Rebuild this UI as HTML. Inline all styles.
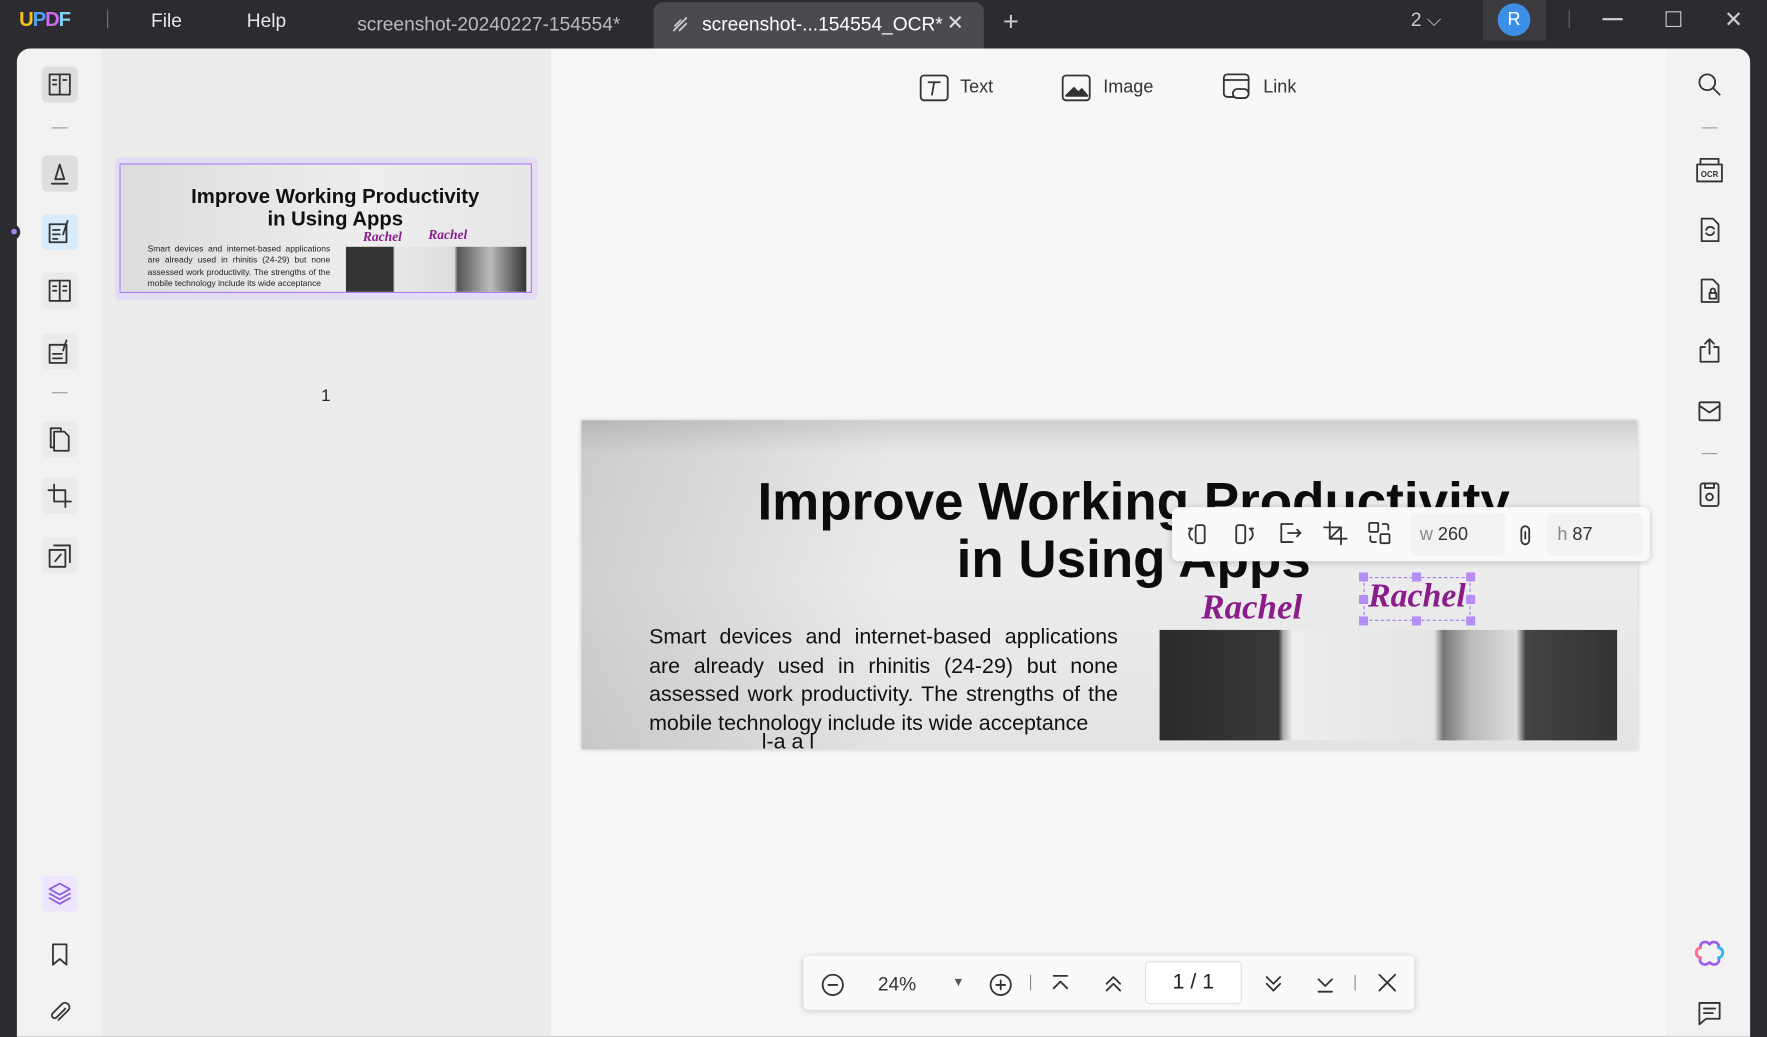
<!DOCTYPE html>
<html><head><meta charset="utf-8"><style>
*{margin:0;padding:0;box-sizing:border-box}
html,body{width:1767px;height:1037px;overflow:hidden;background:#2c2c30;font-family:"Liberation Sans",sans-serif}
#s{width:1568px;height:920px;transform:scale(1.12691);transform-origin:0 0;position:relative;background:#2c2c30}
.a{position:absolute}
.t{color:#e8e8e8;font-size:17px}
svg{position:absolute;fill:none;stroke:#333;stroke-width:1.6;stroke-linecap:round;stroke-linejoin:round}
.ib{position:absolute;left:37px;width:32px;height:32px;border-radius:5px;background:#dedede}
</style></head><body><div id="s">
<!-- title bar -->
<div class="a" style="left:17px;top:7px;font-size:18px;font-weight:bold;letter-spacing:-1px"><span style="color:#f5c21b">U</span><span style="color:#4fa3f7">P</span><span style="color:#c86df0">D</span><span style="color:#7fd3f5">F</span></div>
<div class="a" style="left:95px;top:9px;width:1px;height:16px;background:#777"></div>
<div class="a t" style="left:134px;top:9px">File</div>
<div class="a t" style="left:219px;top:9px">Help</div>
<div class="a" style="left:317px;top:12px;color:#bbb;font-size:17px">screenshot-20240227-154554*</div>
<div class="a" style="left:580px;top:2px;width:293px;height:41px;background:#4a4a4f;border-radius:8px 8px 0 0"></div>
<svg style="left:594px;top:12px" width="20" height="20" viewBox="0 0 20 20"><path d="M4 15 15 4M5 11l5-5M9 15l6-6" stroke="#ccc"/></svg>
<div class="a" style="left:623px;top:12px;color:#fff;font-size:17px">screenshot-...154554_OCR*</div>
<div class="a" style="left:840px;top:10px;color:#ddd;font-size:18px">✕</div>
<div class="a" style="left:890px;top:6px;color:#ccc;font-size:24px">+</div>
<div class="a t" style="left:1252px;top:8px;color:#ccc">2 ⌵</div>
<div class="a" style="left:1316px;top:0;width:56px;height:36px;background:#3a3a3f"></div>
<div class="a" style="left:1329px;top:3px;width:29px;height:29px;border-radius:50%;background:#3d8fe6;color:#fff;font-size:16px;text-align:center;line-height:29px">R</div>
<div class="a" style="left:1392px;top:9px;width:1px;height:16px;background:#666"></div>
<div class="a" style="left:1422px;top:16px;width:18px;height:1.5px;background:#ccc"></div>
<div class="a" style="left:1478px;top:10px;width:14px;height:14px;border:1.5px solid #ccc"></div>
<div class="a" style="left:1530px;top:5px;color:#ccc;font-size:20px">✕</div>
<!-- main -->
<div class="a" style="left:15px;top:43px;width:1538px;height:877px;background:#f7f7f7;border-radius:12px 12px 0 0;overflow:hidden">
 <div class="a" style="left:0;top:0;width:75px;height:877px;background:#f2f2f2"></div>
 <div class="a" style="left:75px;top:0;width:399px;height:877px;background:#ececec"></div>
 <div class="a" style="left:1464px;top:0;width:74px;height:877px;background:#f2f2f2"></div>
</div>
<div class="a" style="left:8px;top:199px;width:10px;height:14px;border-radius:0 8px 8px 0;background:#2c2c30"></div>
<div class="a" style="left:10px;top:203px;width:5px;height:5px;border-radius:50%;background:#a77ef0"></div>
<!-- left icons -->
<div class="ib" style="top:59px"></div><svg style="left:40px;top:62px" width="26" height="26" viewBox="0 0 26 26"><rect x="4" y="4" width="18" height="18"/><path d="M13 4v18M7 9h3M7 13h3M16 9h3"/></svg>
<div class="a" style="left:46px;top:113px;width:14px;height:1px;background:#999"></div>
<div class="ib" style="top:138px"></div><svg style="left:40px;top:141px" width="26" height="26" viewBox="0 0 26 26"><path d="M9 18l4-13 4 13zM6 22h14"/></svg>
<div class="ib" style="top:190px;background:#d9ecfb"></div><svg style="left:40px;top:193px" width="26" height="26" viewBox="0 0 26 26"><rect x="4" y="6" width="15" height="16"/><path d="M7 11h6M7 15h6M7 19h4M20 3l-4 12"/></svg>
<div class="ib" style="top:242px;background:#eaeaea"></div><svg style="left:40px;top:245px" width="26" height="26" viewBox="0 0 26 26"><rect x="4" y="4" width="18" height="18"/><path d="M13 4v18M7 9h3M7 13h3M16 9h3M16 13h3"/></svg>
<div class="ib" style="top:296px;background:#eaeaea"></div><svg style="left:40px;top:299px" width="26" height="26" viewBox="0 0 26 26"><rect x="4" y="7" width="15" height="16"/><path d="M7 15h8M7 19h8M19 3l-3 9"/></svg>
<div class="a" style="left:46px;top:348px;width:14px;height:1px;background:#999"></div>
<div class="ib" style="top:374px;background:#eaeaea"></div><svg style="left:40px;top:377px" width="26" height="26" viewBox="0 0 26 26"><path d="M8 6h9l4 4v13H8zM5 3h9v3M5 3v17h3"/></svg>
<div class="ib" style="top:424px;background:#eaeaea"></div><svg style="left:40px;top:427px" width="26" height="26" viewBox="0 0 26 26"><path d="M8 3v15h15M3 8h15v15"/></svg>
<div class="ib" style="top:477px;background:#eaeaea"></div><svg style="left:40px;top:480px" width="26" height="26" viewBox="0 0 26 26"><rect x="4" y="8" width="14" height="15"/><path d="M8 4h14v15M9 18l5-6"/></svg>
<div class="ib" style="top:777px;background:#ece5fb"></div><svg style="left:40px;top:780px" width="26" height="26" viewBox="0 0 26 26" style="stroke:#8d5ce8"><path d="M13 4l9 5-9 5-9-5zM4 13l9 5 9-5M4 17l9 5 9-5" stroke="#8d5ce8"/></svg>
<svg style="left:40px;top:834px" width="26" height="26" viewBox="0 0 26 26"><path d="M7 4h12v18l-6-5-6 5z"/></svg>
<svg style="left:40px;top:886px" width="26" height="26" viewBox="0 0 26 26"><path d="M18 9l-8 8a2.5 2.5 0 0 1-3.5-3.5l9-9a4 4 0 0 1 5.5 5.5l-9 9"/></svg>
<!-- thumbnail -->
<div class="a" style="left:102px;top:140px;width:375px;height:126px;background:#e4dcf5;border-radius:4px"></div>
<div class="a" style="left:106px;top:145px;width:366px;height:115px;border:1.5px solid #a87ef0;background:linear-gradient(90deg,#dcdcdc,#eee 60%,#e6e6e6);overflow:hidden">
 <div class="a" style="left:0;width:366px;top:18px;text-align:center;font-weight:bold;font-size:18px;line-height:20px;color:#111;padding-left:15px">Improve Working Productivity<br>in Using Apps</div>
 <div class="a" style="left:215px;top:57px;font-style:italic;font-family:'Liberation Serif';font-weight:bold;color:#8a1d8a;font-size:12px">Rachel</div>
 <div class="a" style="left:273px;top:55px;font-style:italic;font-family:'Liberation Serif';font-weight:bold;color:#8a1d8a;font-size:12px">Rachel</div>
 <div class="a" style="left:24px;top:70px;width:162px;font-size:7.5px;line-height:10.3px;text-align:justify;color:#222">Smart devices and internet-based applications are already used in rhinitis (24-29) but none assessed work productivity. The strengths of the mobile technology include its wide acceptance</div>
 <div class="a" style="left:200px;top:73px;width:160px;height:40px;background:linear-gradient(90deg,#333 0,#333 26%,#e8e8e8 27%,#ddd 60%,#555 62%,#bbb 80%,#333)"></div>
</div>
<div class="a" style="left:285px;top:343px;font-size:15px;color:#222">1</div>
<!-- top tools -->
<svg style="left:815px;top:65px" width="28" height="26" viewBox="0 0 28 26"><rect x="2" y="2" width="24" height="22" rx="3"/><path d="M9 8h10M14 8l-2 11" /></svg>
<div class="a" style="left:852px;top:69px;font-size:16px;color:#333">Text</div>
<svg style="left:941px;top:65px" width="28" height="26" viewBox="0 0 28 26"><rect x="2" y="2" width="24" height="22" rx="3"/><path d="M5 20l7-7 4 4 3-3 5 6z" fill="#333"/></svg>
<div class="a" style="left:979px;top:69px;font-size:16px;color:#333">Image</div>
<svg style="left:1084px;top:64px" width="28" height="28" viewBox="0 0 28 28"><rect x="2" y="2" width="22" height="20" rx="3"/><path d="M2 7h22"/><rect x="10" y="15" width="14" height="8" rx="4" fill="#f7f7f7"/></svg>
<div class="a" style="left:1121px;top:69px;font-size:16px;color:#333">Link</div>
<!-- page -->
<div class="a" style="left:516px;top:373px;width:937px;height:292px;background:linear-gradient(180deg,#cfcfcf,#e8e8e8 10%,#ececec 50%,#e3e3e3);box-shadow:0 0 4px rgba(0,0,0,.2);overflow:hidden">
 <div class="a" style="left:0;top:0;width:937px;height:292px;background:linear-gradient(90deg,rgba(0,0,0,.12),rgba(0,0,0,0) 30%)"></div>
 <div class="a" style="left:140px;width:700px;top:46px;text-align:center;font-weight:bold;font-size:47px;line-height:51px;color:#0c0c0c">Improve Working Productivity<br>in Using Apps</div>
 <div class="a" style="left:550px;top:148px;font-style:italic;font-family:'Liberation Serif';font-weight:bold;color:#8a1d8a;font-size:31px">Rachel</div>
 <div class="a" style="left:60px;top:180px;width:416px;font-size:19px;line-height:25.5px;text-align:justify;color:#111">Smart devices and internet-based applications are already used in rhinitis (24-29) but none assessed work productivity. The strengths of the mobile technology include its wide acceptance</div>
 <div class="a" style="left:160px;top:275px;font-size:19px;color:#111">l-a a l</div>
 <div class="a" style="left:513px;top:186px;width:406px;height:98px;background:linear-gradient(90deg,#2a2a2a 0,#3a3a3a 26%,#aaa 27%,#eee 29%,#e4e4e4 60%,#777 62%,#bbb 68%,#ddd 78%,#444 80%,#333 100%)"></div>
</div>
<!-- selection -->
<div class="a" style="left:1210px;top:512px;width:95px;height:39px;border:1.5px dashed #a87ef0"></div>
<div class="a" style="left:1214px;top:512px;font-style:italic;font-family:'Liberation Serif';font-weight:bold;color:#8a1d8a;font-size:30px">Rachel</div>
<div class="a" style="left:1206px;top:508px;width:8px;height:8px;background:#b48ef5"></div>
<div class="a" style="left:1253px;top:508px;width:8px;height:8px;background:#b48ef5"></div>
<div class="a" style="left:1301px;top:508px;width:8px;height:8px;background:#b48ef5"></div>
<div class="a" style="left:1206px;top:528px;width:8px;height:8px;background:#b48ef5"></div>
<div class="a" style="left:1301px;top:528px;width:8px;height:8px;background:#b48ef5"></div>
<div class="a" style="left:1206px;top:547px;width:8px;height:8px;background:#b48ef5"></div>
<div class="a" style="left:1253px;top:547px;width:8px;height:8px;background:#b48ef5"></div>
<div class="a" style="left:1301px;top:547px;width:8px;height:8px;background:#b48ef5"></div>
<!-- image toolbar -->
<div class="a" style="left:1040px;top:450px;width:424px;height:48px;background:#fafafa;border-radius:6px;box-shadow:0 1px 6px rgba(0,0,0,.2)"></div>
<svg style="left:1052px;top:462px" width="24" height="24" viewBox="0 0 24 24"><rect x="9" y="4" width="8" height="16" rx="2"/><path d="M6 7a6 6 0 0 0 0 10M3 7h3"/></svg>
<svg style="left:1092px;top:462px" width="24" height="24" viewBox="0 0 24 24"><rect x="5" y="4" width="8" height="16" rx="2"/><path d="M17 7a6 6 0 0 1 0 10M20 7h-3"/></svg>
<svg style="left:1133px;top:461px" width="24" height="24" viewBox="0 0 24 24"><path d="M14 4H4v16h10M10 12h11M18 9l3 3-3 3"/></svg>
<svg style="left:1173px;top:461px" width="24" height="24" viewBox="0 0 24 24"><path d="M7 2v15h15M2 7h15v15M17 7L7 17"/></svg>
<svg style="left:1212px;top:461px" width="24" height="24" viewBox="0 0 24 24"><rect x="3" y="3" width="8" height="8" rx="1"/><rect x="13" y="13" width="8" height="8" rx="1"/><path d="M15 4h3a2 2 0 0 1 2 2v3M9 20H6a2 2 0 0 1-2-2v-3"/></svg>
<div class="a" style="left:1252px;top:455px;width:84px;height:38px;background:#f2f2f2;border-radius:4px"></div>
<div class="a" style="left:1260px;top:466px;font-size:16px;color:#888">w <span style="color:#333">260</span></div>
<svg style="left:1344px;top:464px" width="20" height="22" viewBox="0 0 20 22"><rect x="6" y="3" width="7" height="16" rx="3.5"/><path d="M9.5 8v6"/></svg>
<div class="a" style="left:1373px;top:455px;width:84px;height:38px;background:#f2f2f2;border-radius:4px"></div>
<div class="a" style="left:1382px;top:466px;font-size:16px;color:#888">h <span style="color:#333">87</span></div>
<!-- right icons -->
<svg style="left:1504px;top:62px" width="26" height="26" viewBox="0 0 26 26"><circle cx="11" cy="11" r="7"/><path d="M16 16l6 6"/></svg>
<div class="a" style="left:1510px;top:113px;width:14px;height:1px;background:#999"></div>
<svg style="left:1504px;top:138px" width="26" height="26" viewBox="0 0 26 26"><path d="M5 8V3h16v5M2 8h22v15H2z"/><text x="13" y="19" font-size="7" text-anchor="middle" fill="#333" stroke="none" font-family="Liberation Sans" font-weight="bold">OCR</text></svg>
<svg style="left:1504px;top:191px" width="26" height="26" viewBox="0 0 26 26"><path d="M6 3h10l5 5v15H6z"/><path d="M10 13a4 4 0 0 1 7 -1M17 15a4 4 0 0 1-7 1"/></svg>
<svg style="left:1504px;top:245px" width="26" height="26" viewBox="0 0 26 26"><path d="M6 3h10l5 5v15H6z"/><rect x="13" y="15" width="6" height="5"/><path d="M14 15v-2a2 2 0 0 1 4 0v2"/></svg>
<svg style="left:1504px;top:298px" width="26" height="26" viewBox="0 0 26 26"><path d="M9 10H5v13h16V10h-4M13 16V3M9 7l4-4 4 4"/></svg>
<svg style="left:1504px;top:352px" width="26" height="26" viewBox="0 0 26 26"><rect x="4" y="5" width="18" height="16" rx="1"/><path d="M4 8l9 6 9-6"/></svg>
<div class="a" style="left:1510px;top:402px;width:14px;height:1px;background:#999"></div>
<svg style="left:1504px;top:426px" width="26" height="26" viewBox="0 0 26 26"><rect x="5" y="3" width="16" height="20" rx="2"/><path d="M9 3v4h8V3"/><circle cx="13" cy="15" r="3"/></svg>
<svg style="left:1503px;top:833px" width="28" height="28" viewBox="0 0 28 28"><path d="M14 5c3-4 9-2 8 3 5 1 5 8 0 9 2 5-4 8-8 4-4 4-10 1-8-4-5-1-5-8 0-9-1-5 5-7 8-3z" stroke="#9a5cf0" stroke-width="2.4"/><path d="M6 17c-5-1-5-8 0-9" stroke="#ff6a8a" stroke-width="2.4"/><path d="M22 8c5 1 5 8 0 9" stroke="#29b8f0" stroke-width="2.4"/></svg>
<svg style="left:1504px;top:886px" width="26" height="26" viewBox="0 0 26 26"><path d="M4 4h18v14H10l-6 5z M8 9h10M8 13h8"/></svg>
<!-- bottom bar -->
<div class="a" style="left:713px;top:848px;width:542px;height:48px;background:#fafafa;border-radius:4px;box-shadow:0 1px 6px rgba(0,0,0,.2)"></div>
<svg style="left:727px;top:862px" width="24" height="24" viewBox="0 0 24 24"><circle cx="12" cy="12" r="9"/><path d="M8 12h8"/></svg>
<div class="a" style="left:779px;top:864px;font-size:17px;color:#333">24%</div>
<div class="a" style="left:845px;top:866px;font-size:11px;color:#555">▼</div>
<svg style="left:876px;top:862px" width="24" height="24" viewBox="0 0 24 24"><circle cx="12" cy="12" r="9"/><path d="M8 12h8M12 8v8"/></svg>
<div class="a" style="left:914px;top:865px;width:1px;height:14px;background:#888"></div>
<svg style="left:930px;top:862px" width="22" height="22" viewBox="0 0 22 22"><path d="M5 4h12M5 15l6-6 6 6"/></svg>
<svg style="left:977px;top:862px" width="22" height="22" viewBox="0 0 22 22"><path d="M5 11l6-6 6 6M5 17l6-6 6 6"/></svg>
<div class="a" style="left:1016px;top:853px;width:86px;height:38px;background:#fff;border:1px solid #e0e0e0;border-radius:4px;text-align:center;font-size:19px;line-height:36px;color:#222">1 / 1</div>
<svg style="left:1119px;top:862px" width="22" height="22" viewBox="0 0 22 22"><path d="M5 5l6 6 6-6M5 11l6 6 6-6"/></svg>
<svg style="left:1165px;top:862px" width="22" height="22" viewBox="0 0 22 22"><path d="M5 7l6 6 6-6M5 18h12"/></svg>
<div class="a" style="left:1202px;top:865px;width:1px;height:14px;background:#888"></div>
<svg style="left:1220px;top:861px" width="22" height="22" viewBox="0 0 22 22"><path d="M4 4l14 14M18 4L4 18"/></svg>
</div></body></html>
